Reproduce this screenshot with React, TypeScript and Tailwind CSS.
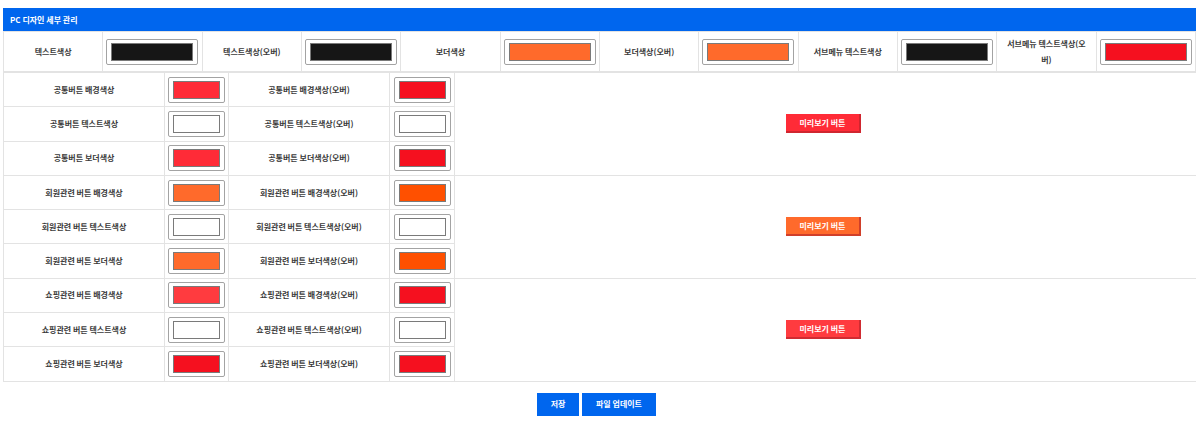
import React from 'react'

const font = { fontFamily: '"Noto Sans CJK KR", "Noto Sans", sans-serif' }

function Swatch({ color, wide }: { color: string; wide?: boolean }) {
  return (
    <div
      className={`${wide ? 'w-[92px]' : 'w-[57px]'} h-[26px] mx-auto border border-[#a3a3a3] rounded-[2px] bg-white px-[4px] py-[3px]`}
    >
      <div className="h-full border border-[#7a7a7a]" style={{ backgroundColor: color }} />
    </div>
  )
}

const topRow: [string, string][] = [
  ['텍스트색상', '#161616'],
  ['텍스트색상(오버)', '#161616'],
  ['보더색상', '#ff6a2b'],
  ['보더색상(오버)', '#ff6a2b'],
  ['서브메뉴 텍스트색상', '#161616'],
  ['서브메뉴 텍스트색상(오버)', '#f5101f'],
]

interface Section {
  name: string
  colors: [string, string][]
  preview: string
}

const sections: Section[] = [
  {
    name: '공통버튼',
    colors: [
      ['#ff2b37', '#f5101f'],
      ['#ffffff', '#ffffff'],
      ['#ff2b37', '#f5101f'],
    ],
    preview: '#ff2b37',
  },
  {
    name: '회원관련 버튼',
    colors: [
      ['#ff6a2b', '#ff5000'],
      ['#ffffff', '#ffffff'],
      ['#ff6a2b', '#ff5000'],
    ],
    preview: '#ff6a2b',
  },
  {
    name: '쇼핑관련 버튼',
    colors: [
      ['#ff3b3f', '#f5101f'],
      ['#ffffff', '#ffffff'],
      ['#f5101f', '#f5101f'],
    ],
    preview: '#ff3b3f',
  },
]

const kinds = ['배경색상', '텍스트색상', '보더색상']

export default function App() {
  return (
    <div className="bg-white w-[1200px] h-[432px] pt-[8px] pl-[3px] pr-[4px] text-[#3a3a3a]" style={font}>
      <div className="h-[23px] bg-[#0066ee] text-white font-bold text-[8px] px-[7px] flex items-center">
        PC 디자인 세부 관리
      </div>

      {/* 상단 공통 색상 */}
      <table className="w-full table-fixed border-collapse text-[8px] font-semibold">
        <tbody>
          <tr className="h-[40px]">
            {topRow.map(([label, color], i) => (
              <React.Fragment key={label}>
                <td className="border border-[#e3e3e3] text-center px-[6px] leading-[16px]">
                  {i === 5 ? (
                    <>
                      서브메뉴 텍스트색상(오
                      <br />
                      버)
                    </>
                  ) : (
                    label
                  )}
                </td>
                <td className="border border-[#e3e3e3]">
                  <Swatch color={color} wide />
                </td>
              </React.Fragment>
            ))}
          </tr>
        </tbody>
      </table>

      {/* 버튼 색상 */}
      <table className="w-full table-fixed border-collapse text-[8px] font-semibold">
        <colgroup>
          <col className="w-[161px]" />
          <col className="w-[64px]" />
          <col className="w-[161px]" />
          <col className="w-[65px]" />
          <col />
        </colgroup>
        <tbody>
          {sections.map((s) =>
            s.colors.map(([c1, c2], r) => (
              <tr key={s.name + r} className="h-[34.3px]">
                <td className="border border-[#e3e3e3] text-center">
                  {s.name} {kinds[r]}
                </td>
                <td className="border border-[#e3e3e3]">
                  <Swatch color={c1} />
                </td>
                <td className="border border-[#e3e3e3] text-center">
                  {s.name} {kinds[r]}(오버)
                </td>
                <td className="border border-[#e3e3e3]">
                  <Swatch color={c2} />
                </td>
                {r === 0 && (
                  <td rowSpan={3} className="border border-[#e3e3e3] border-r-0 text-center">
                    <button
                      className="w-[75px] h-[19px] mr-[4px] text-white font-bold text-[8px] border-r-2 border-b-2 border-[#b0232a]/60"
                      style={{ backgroundColor: s.preview }}
                    >
                      미리보기 버튼
                    </button>
                  </td>
                )}
              </tr>
            ))
          )}
        </tbody>
      </table>

      <div className="flex justify-center gap-[3px] mt-[11px] pr-[6px]">
        <button className="w-[42px] h-[23px] bg-[#0066ee] text-white font-bold text-[8px]">저장</button>
        <button className="w-[74px] h-[23px] bg-[#0066ee] text-white font-bold text-[8px]">파일 업데이트</button>
      </div>
    </div>
  )
}
